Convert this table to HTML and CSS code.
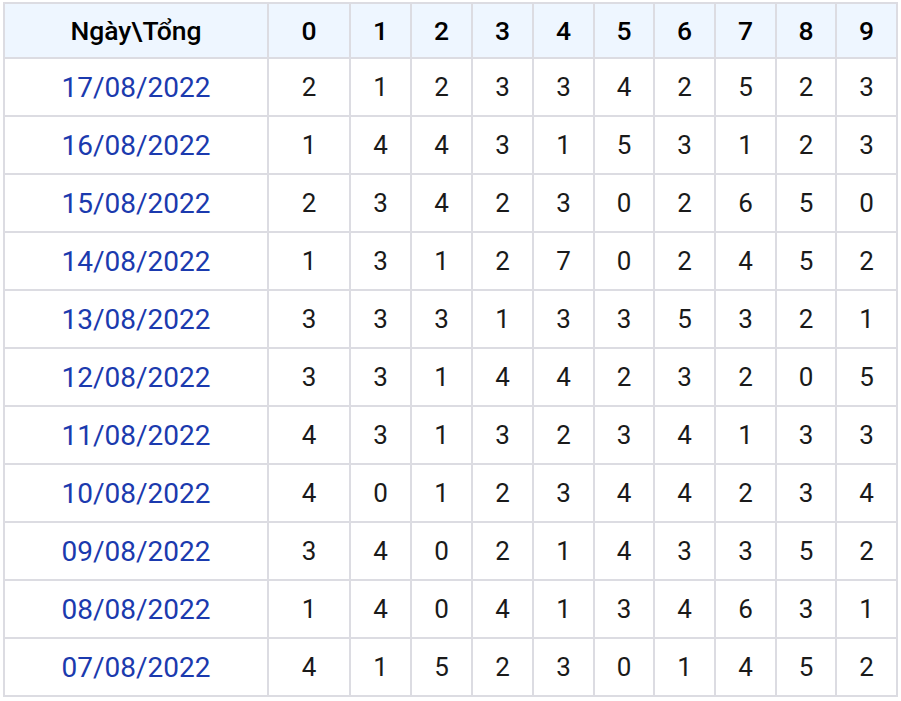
FILE: index.html
```html
<!DOCTYPE html>
<html lang="vi">
<head>
<meta charset="utf-8">
<title>Thống kê tổng</title>
<link rel="stylesheet" href="styles.css">
</head>
<body>
<div class="table">
  <div class="cell head">Ngày\Tổng</div>
  <div class="cell head">0</div><div class="cell head">1</div><div class="cell head">2</div><div class="cell head">3</div><div class="cell head">4</div><div class="cell head">5</div><div class="cell head">6</div><div class="cell head">7</div><div class="cell head">8</div><div class="cell head">9</div>

  <div class="cell date">17/08/2022</div>
  <div class="cell">2</div><div class="cell">1</div><div class="cell">2</div><div class="cell">3</div><div class="cell">3</div><div class="cell">4</div><div class="cell">2</div><div class="cell">5</div><div class="cell">2</div><div class="cell">3</div>

  <div class="cell date">16/08/2022</div>
  <div class="cell">1</div><div class="cell">4</div><div class="cell">4</div><div class="cell">3</div><div class="cell">1</div><div class="cell">5</div><div class="cell">3</div><div class="cell">1</div><div class="cell">2</div><div class="cell">3</div>

  <div class="cell date">15/08/2022</div>
  <div class="cell">2</div><div class="cell">3</div><div class="cell">4</div><div class="cell">2</div><div class="cell">3</div><div class="cell">0</div><div class="cell">2</div><div class="cell">6</div><div class="cell">5</div><div class="cell">0</div>

  <div class="cell date">14/08/2022</div>
  <div class="cell">1</div><div class="cell">3</div><div class="cell">1</div><div class="cell">2</div><div class="cell">7</div><div class="cell">0</div><div class="cell">2</div><div class="cell">4</div><div class="cell">5</div><div class="cell">2</div>

  <div class="cell date">13/08/2022</div>
  <div class="cell">3</div><div class="cell">3</div><div class="cell">3</div><div class="cell">1</div><div class="cell">3</div><div class="cell">3</div><div class="cell">5</div><div class="cell">3</div><div class="cell">2</div><div class="cell">1</div>

  <div class="cell date">12/08/2022</div>
  <div class="cell">3</div><div class="cell">3</div><div class="cell">1</div><div class="cell">4</div><div class="cell">4</div><div class="cell">2</div><div class="cell">3</div><div class="cell">2</div><div class="cell">0</div><div class="cell">5</div>

  <div class="cell date">11/08/2022</div>
  <div class="cell">4</div><div class="cell">3</div><div class="cell">1</div><div class="cell">3</div><div class="cell">2</div><div class="cell">3</div><div class="cell">4</div><div class="cell">1</div><div class="cell">3</div><div class="cell">3</div>

  <div class="cell date">10/08/2022</div>
  <div class="cell">4</div><div class="cell">0</div><div class="cell">1</div><div class="cell">2</div><div class="cell">3</div><div class="cell">4</div><div class="cell">4</div><div class="cell">2</div><div class="cell">3</div><div class="cell">4</div>

  <div class="cell date">09/08/2022</div>
  <div class="cell">3</div><div class="cell">4</div><div class="cell">0</div><div class="cell">2</div><div class="cell">1</div><div class="cell">4</div><div class="cell">3</div><div class="cell">3</div><div class="cell">5</div><div class="cell">2</div>

  <div class="cell date">08/08/2022</div>
  <div class="cell">1</div><div class="cell">4</div><div class="cell">0</div><div class="cell">4</div><div class="cell">1</div><div class="cell">3</div><div class="cell">4</div><div class="cell">6</div><div class="cell">3</div><div class="cell">1</div>

  <div class="cell date">07/08/2022</div>
  <div class="cell">4</div><div class="cell">1</div><div class="cell">5</div><div class="cell">2</div><div class="cell">3</div><div class="cell">0</div><div class="cell">1</div><div class="cell">4</div><div class="cell">5</div><div class="cell">2</div>
</div>
</body>
</html>
```

FILE: styles.css
```css
html, body {
  margin: 0;
  padding: 0;
  background: #ffffff;
}

body {
  font-family: Roboto, "Noto Sans", "DejaVu Sans", sans-serif;
}

.table {
  display: grid;
  grid-template-columns: 262px 80px 59px 59px 59px 59px 58px 59px 59px 58px 59px;
  grid-template-rows: 53px repeat(11, 56px);
  gap: 2px;
  padding: 2px;
  margin: 2px 0 0 3px;
  width: max-content;
  background: #dcdce2;
}

.cell {
  display: flex;
  align-items: center;
  justify-content: center;
  background: #ffffff;
  color: #1a1a1a;
  font-size: 26px;
}

.head {
  background: #eef6ff;
  font-weight: 500;
  font-size: 26.5px;
  color: #000000;
}

.date {
  color: #1b3aae;
  font-size: 28px;
}
```
